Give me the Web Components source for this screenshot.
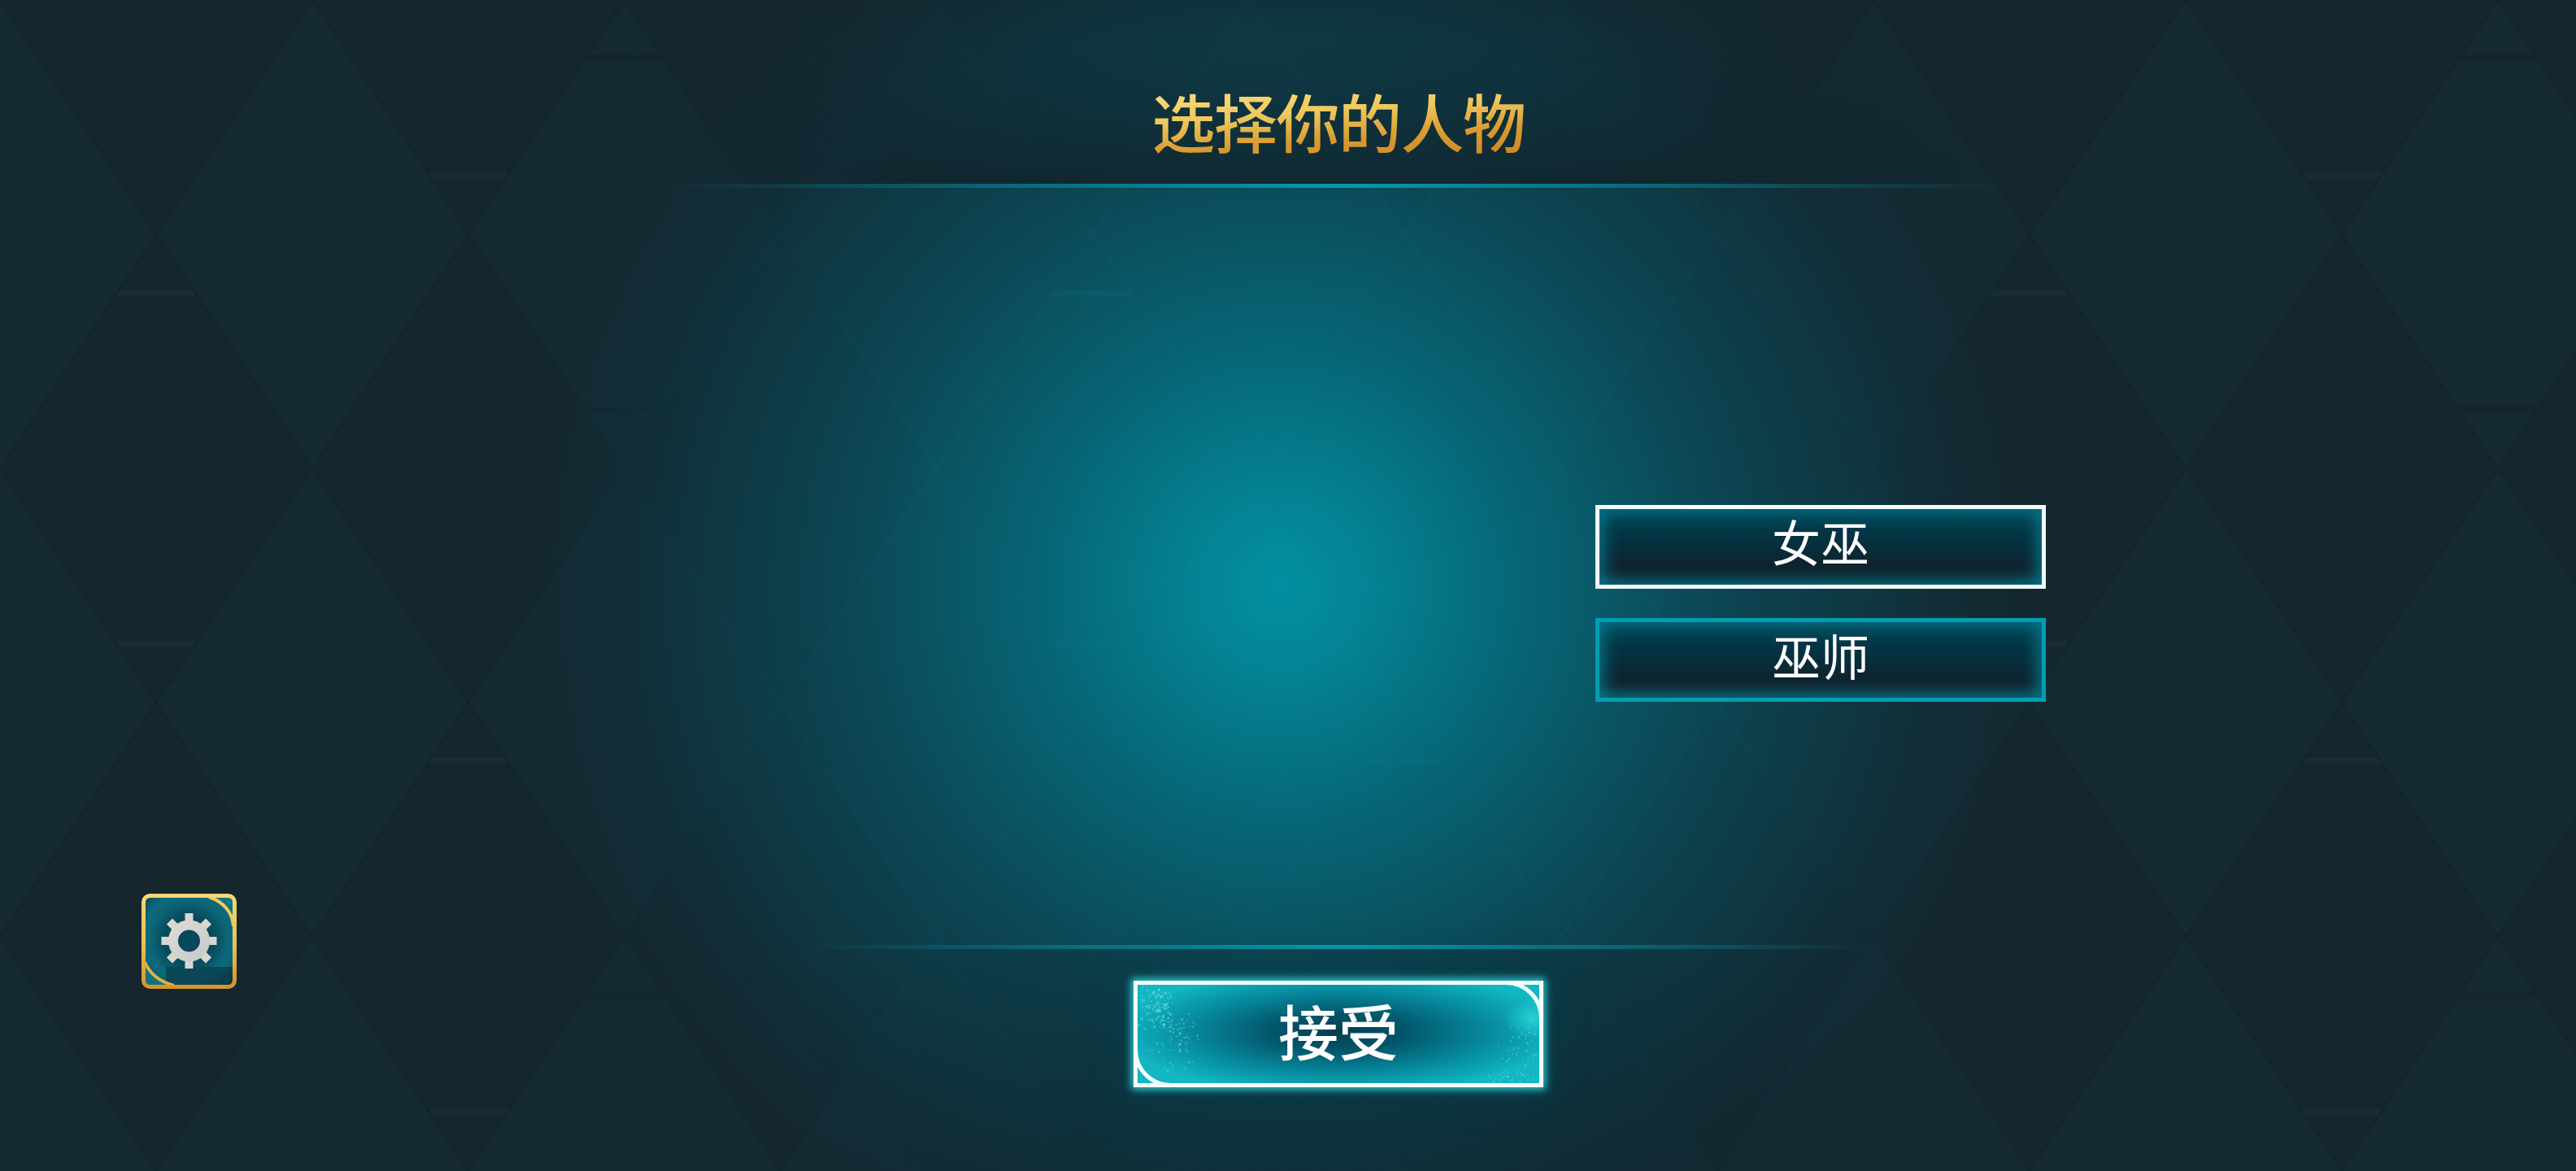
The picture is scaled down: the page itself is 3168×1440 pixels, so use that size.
<!DOCTYPE html>
<html lang="zh">
<head>
<meta charset="utf-8">
<title>选择你的人物</title>
<style>
html,body{margin:0;padding:0;background:#16262e;}
</style>
</head>
<body>
<game-screen>
  <screen-header slot="header">选择你的人物</screen-header>
  <option-button slot="options" selected>女巫</option-button>
  <option-button slot="options">巫师</option-button>
  <settings-button slot="settings"></settings-button>
  <accept-button slot="accept">接受</accept-button>
</game-screen>

<script>
const CJK='"Noto Sans CJK SC","Noto Sans",sans-serif'

//diamonds behind everything
class LatticeBg extends HTMLElement{
    constructor(){
        super()
        this.attachShadow({mode:"open"})
    }
    connectedCallback(){
        const W=384,H=576
        let light='',lines='',bars='',upperBars=''
        for(let j=-1;j<=9;j++){
            for(let m=-1;m<=2;m++){
                const cx=j*W,cy=288+m*H
                light+=`<polygon points="${cx},${cy-288} ${cx+192},${cy} ${cx},${cy+288} ${cx-192},${cy}"/>`
            }
        }
        for(let j=-1;j<=9;j++){
            lines+=`<path d="M${j*W} 0 L${j*W+192} 288 L${j*W} 576 L${j*W+192} 864 L${j*W} 1152 L${j*W+192} 1440"/>`
            lines+=`<path d="M${j*W+384} 0 L${j*W+192} 288 L${j*W+384} 576 L${j*W+192} 864 L${j*W+384} 1152 L${j*W+192} 1440"/>`
        }
        const bar=(x,y,fill)=>`<rect x="${x-48}" y="${y-4}" width="96" height="8" fill="${fill}"/>`
        const lightBar='#182c35',darkBar='#14252d'
        for(let k=0;k<3;k++){
            const a=192+k*3*W,b=a+W,c=768+k*3*W
            bars+=bar(a,361,lightBar)+bar(a,792,lightBar)
            bars+=bar(b,216,lightBar)+bar(b,936,lightBar)+bar(b,1368,lightBar)
            bars+=bar(c,71,darkBar)+bar(c,504,darkBar)+bar(c,1224,darkBar)
            upperBars+=bar(a,361,'#0f7a88')+bar(a,792,'#0f7a88')+bar(b,936,'#0f7a88')
        }
        this.shadowRoot.innerHTML=`
        <style>
        :host{display:block;width:3168px;height:1440px;overflow:hidden;background:#15262d;}
        .stack{display:grid;width:100%;height:100%;}
        .stack>*{grid-area:1/1;}
        svg{display:block;}
        .glow{
          background:radial-gradient(circle at 1575px 720px,
            rgba(2,147,165,.97) 0,
            rgba(3,137,154,.95) 100px,
            rgba(4,122,139,.93) 200px,
            rgba(5,106,123,.92) 300px,
            rgba(8,93,109,.9) 400px,
            rgba(10,79,94,.88) 500px,
            rgba(11,68,82,.85) 600px,
            rgba(13,60,72,.78) 700px,
            rgba(15,50,62,.55) 800px,
            rgba(17,44,54,.24) 900px,
            rgba(18,42,52,0) 1010px);
        }
        .over{
          -webkit-mask-image:radial-gradient(circle at 1575px 720px,rgba(0,0,0,.4) 0,#000 450px,transparent 950px);
          mask-image:radial-gradient(circle at 1575px 720px,rgba(0,0,0,.4) 0,#000 450px,transparent 950px);
          opacity:.16;
        }
        </style>
        <div class="stack">
        <svg width="3168" height="1440" viewBox="0 0 3168 1440">
          <g fill="#152a32">${light}</g>
          ${bars}
          <g fill="none" stroke="#13252d" stroke-width="3">${lines}</g>
        </svg>
        <div class="glow"></div>
        <svg class="over" width="3168" height="1440" viewBox="0 0 3168 1440">
          ${upperBars}
          <g fill="none" stroke="#0a7080" stroke-width="3">${lines}</g>
        </svg>
        </div>`
    }
}
customElements.define('lattice-bg',LatticeBg)


class GlowRule extends HTMLElement{
    constructor(){
        super()
        const shadow=this.attachShadow({mode:"open"})
        shadow.innerHTML=`
        <style>
        :host{
          display:block;height:5px;
          background:linear-gradient(90deg,rgba(6,150,168,0) 0,rgba(6,150,168,.55) 30%,#0799ab 50%,rgba(6,150,168,.55) 70%,rgba(6,150,168,0) 100%);
        }
        </style>`
    }
}
customElements.define('glow-rule',GlowRule)


class ScreenHeader extends HTMLElement{
    constructor(){
        super()
        const shadow=this.attachShadow({mode:"open"})
        shadow.innerHTML=`
        <style>
        :host{display:block;position:relative;height:231px;}
        .shade{
          position:absolute;inset:0 auto 5px 50%;width:1800px;margin-left:-900px;
          background:linear-gradient(180deg,rgba(19,38,46,.1) 50px,rgba(18,36,44,.9) 100%);
          -webkit-mask-image:linear-gradient(90deg,transparent 0,#000 20%,#000 80%,transparent 100%);
          mask-image:linear-gradient(90deg,transparent 0,#000 20%,#000 80%,transparent 100%);
        }
        .inner{position:relative;display:flex;flex-direction:column;height:100%;align-items:center;}
        h1{
          margin:0;flex:1;padding-top:109px;box-sizing:border-box;
          font:500 78px/1 ${CJK};
          letter-spacing:-1.5px;
          background:linear-gradient(176deg,#f8dc7c 112px,#efc95f 150px,#d99a2e 188px,#cf8a26 220px);
          -webkit-background-clip:text;background-clip:text;
          color:transparent;-webkit-text-fill-color:transparent;
        }
        glow-rule{width:1640px;}
        </style>
        <div class="shade"></div>
        <div class="inner">
          <h1><slot></slot></h1>
          <glow-rule></glow-rule>
        </div>`
    }
}
customElements.define('screen-header',ScreenHeader)


class OptionButton extends HTMLElement{
    constructor(){
        super()
        const shadow=this.attachShadow({mode:"open"})
        shadow.innerHTML=`
        <style>
        :host{
          display:flex;align-items:center;justify-content:center;
          box-sizing:border-box;width:554px;height:103px;padding-bottom:14px;
          border:5px solid #049db0;
          background:linear-gradient(180deg,#023b4b 18%,#06303e 45%,#10202a 82%);
          box-shadow:inset 0 0 20px 5px #05788b;
          font:400 60px/1 ${CJK};color:#fff;
        }
        :host([selected]){border-color:#f2fbfc;padding-bottom:16px;}
        </style>
        <slot></slot>`
    }
}
customElements.define('option-button',OptionButton)


class AcceptButton extends HTMLElement{
    constructor(){
        super()
        this.attachShadow({mode:"open"})
    }
    connectedCallback(){
        //little seeded speckle so the stone texture stays the same each run
        let s=7
        const rnd=()=>{s=(s*16807)%2147483647;return s/2147483647}
        let dots=''
        const cloud=(n,x,y,w,h,o)=>{
            for(let i=0;i<n;i++){
                const dx=x+(rnd()+rnd())/2*w,dy=y+(rnd()+rnd())/2*h
                dots+=`<circle cx="${dx.toFixed(1)}" cy="${dy.toFixed(1)}" r="${(0.5+rnd()*1.1).toFixed(1)}" opacity="${(o*(.4+rnd()*.6)).toFixed(2)}"/>`
            }
        }
        cloud(150,0,0,50,60,.5)
        cloud(70,25,25,55,70,.4)
        cloud(30,5,70,70,50,.3)
        cloud(60,440,40,55,80,.35)
        cloud(40,420,105,70,18,.35)
        this.shadowRoot.innerHTML=`
        <style>
        :host{
          display:flex;align-items:center;justify-content:center;position:relative;
          box-sizing:border-box;width:504px;height:131px;padding-bottom:12px;
          border:5px solid #f4ffff;
          background:
            radial-gradient(ellipse 275px 76px at 50% 48%,#023e4e 0,#03566a 30%,#068398 62%,#0a9fb0 82%,#13b7c4 100%);
          box-shadow:0 0 9px 3px rgba(54,225,232,.85),0 0 34px 10px rgba(6,62,74,.75);
          font:500 74px/1 ${CJK};color:#fff;
        }
        .corners{
          position:absolute;inset:-5px;
          border:5px solid #f4ffff;border-radius:0 46px 0 46px;
        }
        .tex{position:absolute;inset:0;width:100%;height:100%;}
        .spark{
          position:absolute;right:0;top:18px;width:44px;height:48px;
          background:radial-gradient(ellipse at 80% 50%,rgba(50,235,230,.6),rgba(50,235,230,0) 72%);
        }
        slot{position:relative;}
        </style>
        <div class="spark"></div>
        <svg class="tex" viewBox="0 0 494 121" fill="#8ff0ee">${dots}</svg>
        <div class="corners"></div>
        <slot></slot>`
    }
}
customElements.define('accept-button',AcceptButton)


class SettingsButton extends HTMLElement{
    constructor(){
        super()
        const shadow=this.attachShadow({mode:"open"})
        let teeth=''
        for(let a=0;a<360;a+=45){
            teeth+=`<rect x="53.5" y="24" width="10" height="14" transform="rotate(${a} 58.5 58)"/>`
        }
        shadow.innerHTML=`
        <style>
        :host{display:block;width:117px;height:117px;}
        svg{display:block;}
        </style>
        <svg width="117" height="117" viewBox="0 0 117 117">
          <defs>
            <linearGradient id="gold" x1="0" y1="0" x2="0" y2="1">
              <stop offset="0" stop-color="#f6d873"/>
              <stop offset=".55" stop-color="#e9bf55"/>
              <stop offset="1" stop-color="#d6952b"/>
            </linearGradient>
            <radialGradient id="face" cx=".5" cy=".45" r=".72">
              <stop offset="0" stop-color="#073f50"/>
              <stop offset=".45" stop-color="#0a5e70"/>
              <stop offset=".72" stop-color="#0c6a7b"/>
              <stop offset="1" stop-color="#0a3f50"/>
            </radialGradient>
            <linearGradient id="steel" gradientUnits="userSpaceOnUse" x1="30" y1="30" x2="86" y2="86">
              <stop offset="0" stop-color="#e0dcd2"/>
              <stop offset="1" stop-color="#c4c8cb"/>
            </linearGradient>
            <radialGradient id="halo" cx=".5" cy=".5" r=".5">
              <stop offset=".65" stop-color="#07495a" stop-opacity=".85"/>
              <stop offset="1" stop-color="#07495a" stop-opacity="0"/>
            </radialGradient>
          </defs>
          <rect x="2" y="2" width="113" height="113" rx="8" fill="#0e7482"/>
          <path d="M5 5H82C100 10 112 24 112 40V112H38C22 108 10 96 5 84Z" fill="url(#face)"/>
          <rect x="30" y="90" width="82" height="22" fill="#0b3040" opacity=".6"/>
          <circle cx="58.5" cy="58" r="46" fill="url(#halo)"/>
          <path d="M83 4C100 10 112 22 113 40" fill="none" stroke="#efca60" stroke-width="4"/>
          <path d="M4 84C10 98 22 108 40 113" fill="none" stroke="#e3b044" stroke-width="4"/>
          <g fill="url(#steel)">${teeth}</g>
          <circle cx="58.5" cy="58" r="19.5" fill="none" stroke="url(#steel)" stroke-width="12"/>
          <rect x="2.5" y="2.5" width="112" height="112" rx="8" fill="none" stroke="url(#gold)" stroke-width="5"/>
        </svg>`
    }
}
customElements.define('settings-button',SettingsButton)


class GameScreen extends HTMLElement{
    constructor(){
        super()
        const shadow=this.attachShadow({mode:"open"})
        shadow.innerHTML=`
        <style>
        :host{display:block;width:3168px;height:1440px;overflow:hidden;}
        .stack{display:grid;width:100%;height:100%;}
        .stack>*{grid-area:1/1;}
        .ui{
          position:relative;display:flex;flex-direction:column;box-sizing:border-box;
          height:1440px;padding-left:124px;
        }
        .options{
          flex:1;display:flex;flex-direction:column;gap:36px;
          box-sizing:border-box;padding:390px 0 0 1838px;
        }
        .foot{
          display:grid;grid-template-columns:1fr 1320px 1fr;height:341px;
        }
        .left{padding-left:50px;}
        .mid{
          display:flex;flex-direction:column;align-items:center;
          padding-top:63px;box-sizing:border-box;height:100%;
        }
        .band{
          flex:1;align-self:stretch;display:flex;flex-direction:column;align-items:center;padding-top:39px;
          background:linear-gradient(90deg,rgba(14,34,42,0),rgba(14,34,42,.28) 25%,rgba(14,34,42,.28) 75%,rgba(14,34,42,0));
        }
        glow-rule{width:1320px;flex:none;}
        </style>
        <div class="stack">
          <lattice-bg></lattice-bg>
          <div class="ui">
            <slot name="header"></slot>
            <div class="options"><slot name="options"></slot></div>
            <div class="foot">
              <div class="left"><slot name="settings"></slot></div>
              <div class="mid">
                <glow-rule></glow-rule>
                <div class="band"><slot name="accept"></slot></div>
              </div>
            </div>
          </div>
        </div>`
    }
}
customElements.define('game-screen',GameScreen)
</script>
</body>
</html>
